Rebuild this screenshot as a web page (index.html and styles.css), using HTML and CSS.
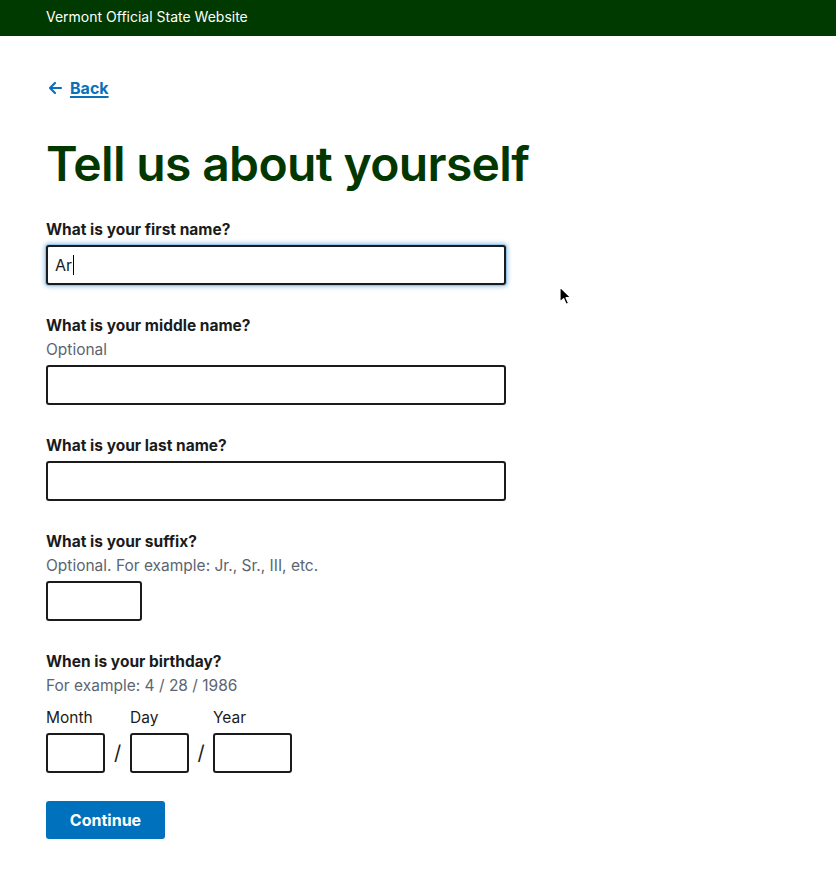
FILE: index.html
```html
<!DOCTYPE html>
<html lang="en">
<head>
<meta charset="utf-8">
<title>Tell us about yourself</title>
<link rel="stylesheet" href="styles.css">
</head>
<body>
<header class="banner">Vermont Official State Website</header>
<main class="page">
  <a class="back" href="#">
    <svg class="back__icon" viewBox="0 0 16 16" width="16" height="16" aria-hidden="true"><path d="M14 8H3M8 3L3 8l5 5" fill="none" stroke="currentColor" stroke-width="2.2" stroke-linecap="round" stroke-linejoin="round"/></svg>
    <span class="back__text">Back</span>
  </a>
  <h1 class="title">Tell us about yourself</h1>
  <form class="form">
    <div class="group group--first">
      <label class="label">What is your first name?</label>
      <div class="field field--wide field--focus">Ar<span class="caret"></span></div>
    </div>
    <div class="group">
      <label class="label">What is your middle name?</label>
      <div class="hint">Optional</div>
      <input class="field field--wide" type="text">
    </div>
    <div class="group">
      <label class="label">What is your last name?</label>
      <input class="field field--wide" type="text">
    </div>
    <div class="group">
      <label class="label">What is your suffix?</label>
      <div class="hint">Optional. For example: Jr., Sr., III, etc.</div>
      <input class="field field--suffix" type="text">
    </div>
    <div class="group">
      <label class="label">When is your birthday?</label>
      <div class="hint">For example: 4 / 28 / 1986</div>
      <div class="date">
        <div class="date__part">
          <span class="date__label">Month</span>
          <input class="field field--short" type="text">
        </div>
        <span class="date__sep">/</span>
        <div class="date__part">
          <span class="date__label">Day</span>
          <input class="field field--short" type="text">
        </div>
        <span class="date__sep date__sep--b">/</span>
        <div class="date__part">
          <span class="date__label">Year</span>
          <input class="field field--year" type="text">
        </div>
      </div>
    </div>
    <button class="button" type="button">Continue</button>
  </form>
</main>
<svg class="pointer" width="14" height="20" viewBox="0 0 14 20" aria-hidden="true"><path d="M1 1v15l3.6-3.4 2.6 5.8 2.4-1.1-2.6-5.6H12z" fill="#000" stroke="#fff" stroke-width="1.2" stroke-linejoin="round"/></svg>
</body>
</html>
```

FILE: styles.css
```css
* { box-sizing: border-box; }
html, body { margin: 0; padding: 0; background: #fff; }
body {
  font-family: "Inter", "Liberation Sans", sans-serif;
  color: #1b1b1b;
  position: relative;
  min-height: 878px;
}
.banner {
  background: #003a00;
  color: #fff;
  height: 36px;
  line-height: 34px;
  padding-left: 46px;
  font-size: 14px;
}
.page {
  padding: 0 46px 40px;
}
.back {
  display: inline-flex;
  align-items: center;
  gap: 7px;
  margin-top: 42px;
  height: 20px;
  color: #0b6fba;
  font-weight: 700;
  font-size: 16px;
  text-decoration: none;
  padding-left: 1px;
}
.back__icon { display: block; }
.back__text { text-decoration: underline; text-underline-offset: 2px; text-decoration-thickness: 1.5px; }
.title {
  margin: 34px 0 0;
  font-size: 48px;
  line-height: 60px;
  font-weight: 600;
  color: #023800;
  letter-spacing: -0.65px;
}
.form {
  display: flex;
  flex-direction: column;
  align-items: flex-start;
}
.group {
  display: flex;
  flex-direction: column;
  margin-top: 30px;
}
.group--first { margin-top: 25px; }
.label {
  font-size: 15.5px;
  line-height: 20px;
  font-weight: 700;
  padding-top: 1px;
  margin-bottom: 5px;
}
.hint {
  font-size: 15.5px;
  line-height: 20px;
  color: #5c6570;
  margin-top: -1px;
  margin-bottom: 5px;
}
.field {
  height: 40px;
  border: 2px solid #1b1b1b;
  border-radius: 3px;
  background: #fff;
  font: inherit;
  font-size: 16px;
  padding: 0 7px;
  margin: 0;
}
.field--wide { width: 460px; }
.field--suffix { width: 96px; }
.field--short { width: 59px; }
.field--year { width: 79px; }
.field--focus {
  display: flex;
  align-items: center;
  box-shadow: 0 0 0 1px rgba(90, 160, 220, 0.35), 0 0 4px 2px rgba(90, 160, 220, 0.55);
}
.caret {
  display: inline-block;
  width: 1px;
  height: 20px;
  background: #000;
  margin-left: 1px;
}
.date {
  display: flex;
  align-items: flex-end;
  margin-top: 6px;
}
.date__part {
  display: flex;
  flex-direction: column;
  gap: 5px;
}
.date__label {
  font-size: 15.5px;
  line-height: 20px;
  padding-top: 1px;
}
.date__sep {
  font-size: 20px;
  line-height: 40px;
  width: 25px;
  text-align: center;
}
.date__sep--b { width: 24px; }
.button {
  margin-top: 28px;
  width: 119px;
  height: 38px;
  border: 0;
  border-radius: 3px;
  background: #0071bc;
  color: #fff;
  font: inherit;
  font-size: 16px;
  font-weight: 700;
}
.pointer {
  position: absolute;
  left: 559px;
  top: 286px;
}
```
